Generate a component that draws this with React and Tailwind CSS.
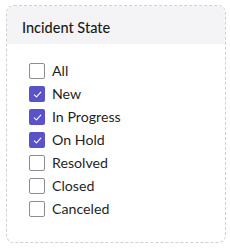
import React from "react";

const items = [
  { label: "All", checked: false },
  { label: "New", checked: true },
  { label: "In Progress", checked: true },
  { label: "On Hold", checked: true },
  { label: "Resolved", checked: false },
  { label: "Closed", checked: false },
  { label: "Canceled", checked: false },
];

function Box({ checked }) {
  if (checked) {
    return (
      <span className="flex h-[16px] w-[16px] shrink-0 items-center justify-center rounded-[2px] bg-[#5a52c9]">
        <svg width="11" height="11" viewBox="0 0 12 12" fill="none">
          <path d="M2.5 6.3 L4.9 8.6 L9.6 3.4" stroke="white" strokeWidth="1.2" strokeLinecap="round" strokeLinejoin="round" />
        </svg>
      </span>
    );
  }
  return <span className="block h-[16px] w-[16px] shrink-0 rounded-[2px] border border-[#8a8d96] bg-white" />;
}

export default function App() {
  return (
    <div className="h-[250px] w-[230px] bg-white pl-[6px] pt-[5px]" style={{ fontFamily: "Lato, 'Noto Sans', sans-serif" }}>
      <div className="h-[238px] w-[220px] overflow-hidden rounded-[8px] border border-dashed border-[#cfd0d4] bg-white">
        <div className="flex h-[38px] items-center bg-[#f4f4f6] px-[15px] pt-[5px] text-[14.5px] font-medium text-[#1a1a1a]">Incident State</div>
        <div className="flex flex-col gap-[7px] pl-[22px] pt-[19px]">
          {items.map((it) => (
            <label key={it.label} className="flex h-[16px] items-center gap-[7px] text-[14.2px] text-[#1f1f1f]">
              <Box checked={it.checked} />
              <span>{it.label}</span>
            </label>
          ))}
        </div>
      </div>
    </div>
  );
}
